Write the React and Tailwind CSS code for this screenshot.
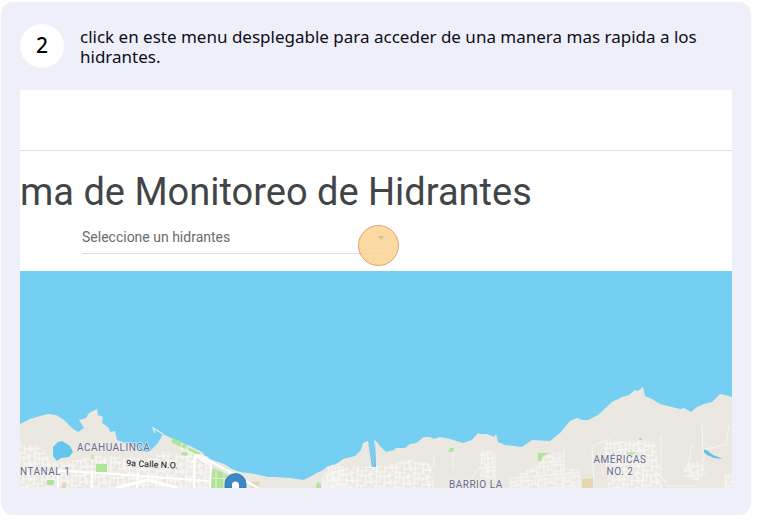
import React from 'react';

const COAST =
  'M20 424 30 419 40 416 48 414 56 415 64 420 72 428 78 432 84 428 79 420 86 418 89 413 97 409 98 415 103 417 102 423 109 428 110 432 115 431 117 440 128 444 138 447 142 452 149 452 158 443 163 434 175 440 190 446 202 452 206 457 215 461 224 464 232 469 240 472 255 474 268 477 275 477 290 478 303 480 310 477 315 474 323 470 328 466 335 465 343 459 355 456 361 450 363 443 368 441 370 449 373 462 374 467 375 450 374 440 376 441 380 446 386 452 394 450 396 448 405 448 410 444 416 443 424 437 430 437 434 439 440 437 450 439 463 443 472 440 478 433 480 434 487 434 494 437 496 434 498 442 505 445 522 447 532 440 550 441 560 433 570 421 577 418 582 420 588 420 598 415 612 402 622 397 629 395 635 390 638 391 643 387 645 396 652 399 660 404 680 409 684 408 691 412 697 407 704 404 712 402 720 394 725 395 732 397V488H20Z';

function HydrantMap() {
  return (
    <svg
      viewBox="20 271 712 217"
      className="block w-full"
      role="img"
      aria-label="Mapa de hidrantes"
    >
      <defs>
        <pattern id="blocks" width="19" height="15" patternUnits="userSpaceOnUse" patternTransform="rotate(3)">
          <path
            d="M0 1H12M12 4H19M2 0V15M6 1V9M2 6H15M10 4V15M0 11H7M10 12H19M15 1V12M17 8V15"
            stroke="#fdfcfa"
            strokeWidth="1"
            fill="none"
          />
        </pattern>
        <pattern id="fineBlocks" width="17" height="13" patternUnits="userSpaceOnUse" patternTransform="rotate(-5)">
          <path
            d="M0 1H17M1 0V13M4 1V8M1 5H12M8 1V13M12 4V10M8 9H17M15 0V9M0 11H8"
            stroke="#fcfbf8"
            strokeWidth="0.9"
            fill="none"
          />
        </pattern>
      </defs>
      <rect x="20" y="271" width="712" height="217" fill="#75cff2" />
      <path d={COAST} fill="#ebe8e2" />
      <path d="M163 434 153 428 155 433" stroke="#f0eee9" strokeWidth="1.2" fill="none" />

      <g fill="url(#blocks)">
        <path d="M20 444 40 446 52 462 78 460 92 456 150 458 164 450 176 453 208 456 212 466 208 488H20Z" />
        <path d="M328 474 345 467 385 466 408 460 432 464 434 488H322Z" />
        <path d="M604 442 642 440 656 444 662 488H608Z" />
        <path d="M176 444 194 450 208 460 190 462Z" />
      </g>
      <g fill="url(#fineBlocks)">
        <path d="M480 452 494 450 496 478 480 478Z" />
        <path d="M508 478 536 466 548 454 563 452 564 468 580 470 582 488H508Z" />
        <path d="M684 464 700 462 706 474 696 480 684 476Z" />
        <path d="M724 474H732V488H724Z" />
        <path d="M328 466 342 462 350 488 318 488Z" />
      </g>

      <g fill="#b1e39b">
        <path d="m173 438 9 4-2 5-9-5Z" />
        <path d="m183 444 4 1-1 4-5-2Z" />
        <path d="m188 447 13 6-3 2-10-5Z" />
        <path d="m182 452 6 1-1 3-6-1Z" />
        <path d="M96 464H107V472H96Z" />
        <path d="M47 480H54V485H47Z" />
        <path d="m213 468 15 7-4 13H209Z" />
        <path d="m317 482 4 2v4h-5Z" />
        <path d="m450 448 4 0-1 4-5 0Z" />
        <path d="m538 453 12 0-7 3-2 5h-3Z" />
        <path d="m626 453 10-1-4 3h-5Z" />
        <path d="m639 438 3 0v2h-3Z" />
      </g>
      <g fill="#e4d8b4">
        <path d="M582 479 594 478 594 488H582Z" />
        <path d="M91 455H94V459H91Z" />
        <path d="m252 482 8-1-2 7h-7Z" />
        <path d="M62 483H66V488H62Z" />
      </g>

      <path d="m53 447 5-5 4-1 8 5 3 6-4 5-8 1-4 3-4-5Z" fill="#66c5ec" />
      <path d="m368 441 6 26 1-26 1 26h-4Z" fill="#66bfe2" />
      <path d="m704 449 4 2 5 4 10 4-9-1-7-3-3-3Z" fill="#63bfe2" />

      <g stroke="#ffffff" fill="none">
        <path
          d="M58 488V472Q59 470 63 471L100 473 208 481M92 473V488M138 473 137 488M20 474 50 472M210 488 211 465Q198 460 197 454"
          strokeWidth="2"
        />
        <path d="M194 488V462Q194 453 202 457L230 472 258 488" strokeWidth="2.4" />
        <path d="M116 488 148 480 178 488" strokeWidth="3" />
        <path d="M212 478 230 479M216 470V488M224 473V488" strokeWidth="1" stroke="#dff3d5" />
        <path
          d="M453 452V470M434 455V468M472 478 482 464 482 450M488 450V482M495 453V480M564 448V488M594 488 592 446 610 439M661 435V478L668 486H697M702 422 703 462Q704 480 696 480L688 466 692 443M704 449 726 445 729 426M641 458 666 482"
          stroke="#f8f6f2"
          strokeWidth="1"
        />
      </g>

      <g
        className="font-['Roboto',sans-serif] text-[10px] tracking-wider"
        fill="#666a92"
        stroke="#f4f2ee"
        strokeWidth="2"
        paintOrder="stroke"
        strokeOpacity="0.6"
      >
        <text x="77" y="451">ACAHUALINCA</text>
        <text x="20" y="475">NTANAL 1</text>
        <text x="449" y="488">BARRIO LA</text>
        <text x="620" y="463" textAnchor="middle">AMÉRICAS</text>
        <text x="620" y="475" textAnchor="middle">NO. 2</text>
      </g>
      <text
        x="126"
        y="466"
        transform="rotate(3 126 466)"
        className="font-['Roboto',sans-serif] text-[9px] font-medium"
        fill="#333333"
        stroke="#ffffff"
        strokeWidth="1"
        paintOrder="stroke"
      >
        9a Calle N.O.
      </text>

      <path d="M225 488V484A10 10 0 0 1 246 484V488Z" fill="#3c87c5" stroke="#3274ac" strokeWidth="0.8" />
      <path d="M232 488V485A3 3 0 0 1 239 485V488Z" fill="#ffffff" />
    </svg>
  );
}

export default function App() {
  return (
    <div className="bg-white pt-0.5 pr-1.5 pl-px">
      <article className="rounded-xl bg-[#efeff9] px-[19px] pb-[27px]">
        <header className="flex h-[88px] items-center gap-4">
          <span className="flex size-11 shrink-0 items-center justify-center rounded-full bg-white font-['Noto_Sans',sans-serif] text-[21px] font-medium text-black">
            2
          </span>
          <p className="pt-0.5 font-['Noto_Sans',sans-serif] text-[17px] leading-5 text-[#0d0d1c]">
            click en este menu desplegable para acceder de una manera mas rapida a los hidrantes.
          </p>
        </header>

        <section className="overflow-hidden bg-white font-['Roboto',sans-serif]">
          <div className="h-[61px] border-b border-[#dedede]" />
          <h1 className="mt-[17px] text-[38px] leading-12 whitespace-nowrap text-[#424547]">
            ma de Monitoreo de Hidrantes
          </h1>
          <div className="relative mt-1.5 mb-[17px] ml-[62px] w-[304px]">
            <select
              aria-label="Seleccione un hidrantes"
              className="block h-8 w-full appearance-none border-b border-[#dddddd] bg-transparent pb-0.5 text-sm text-[#6b6b6b] outline-none"
            >
              <option>Seleccione un hidrantes</option>
            </select>
            <svg viewBox="0 0 6 4" className="absolute top-[14px] right-0.5 h-1 w-1.5" aria-hidden="true">
              <path d="M0 0H6L3 4Z" fill="#333333" />
            </svg>
            <span className="absolute top-[3px] -right-[13px] size-[41px] rounded-full border border-[#e7a066] bg-[#fad293]/85" />
          </div>
          <HydrantMap />
        </section>
      </article>
    </div>
  );
}
